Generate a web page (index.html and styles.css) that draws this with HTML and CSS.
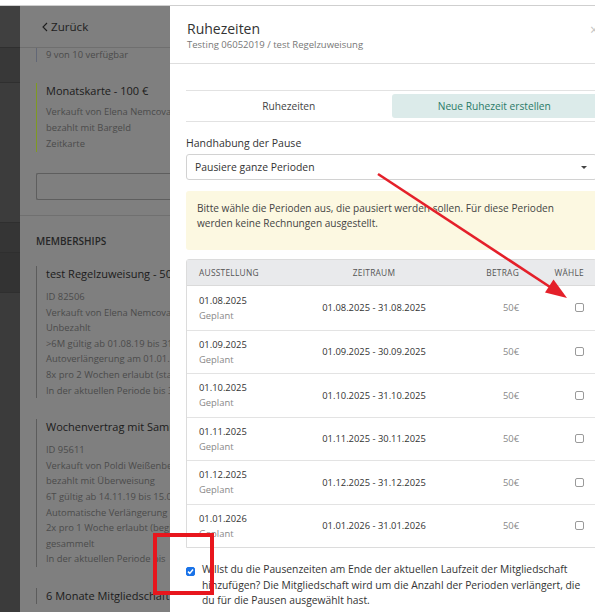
FILE: index.html
```html
<!DOCTYPE html>
<html lang="de">
<head>
<meta charset="utf-8">
<title>Ruhezeiten</title>
<link rel="stylesheet" href="styles.css">
</head>
<body>
<div class="topbar"></div>
<div class="app">
  <nav class="sidebar">
    <div class="side-item s1"></div>
    <div class="side-item s2"></div>
    <div class="side-item s3"></div>
    <div class="side-item s4"></div>
    <div class="side-item s5"></div>
    <div class="side-item s6"></div>
  </nav>
  <section class="panel">
    <div class="panel-head">
      <svg class="chev" width="6" height="10" viewBox="0 0 6 10"><path d="M5 1 L1 5 L5 9" fill="none" stroke="#1e1e1e" stroke-width="1.1"/></svg>
      <span>Zurück</span>
    </div>
    <div class="panel-top">
      <div class="pcard tail"><div class="pline">9 von 10 verfügbar</div></div>
      <div class="pcard green">
        <div class="ptitle">Monatskarte - 100 €</div>
        <div class="plines wide">
          <div class="pline">Verkauft von Elena Nemcova</div>
          <div class="pline">bezahlt mit Bargeld</div>
          <div class="pline">Zeitkarte</div>
        </div>
      </div>
      <div class="search"></div>
    </div>
    <div class="panel-section">
      <div class="section-title">MEMBERSHIPS</div>
      <div class="pcard">
        <div class="ptitle">test Regelzuweisung - 50 €</div>
        <div class="plines">
          <div class="pline">ID 82506</div>
          <div class="pline">Verkauft von Elena Nemcova</div>
          <div class="pline">Unbezahlt</div>
          <div class="pline">&gt;6M gültig ab 01.08.19 bis 31.12.19</div>
          <div class="pline">Autoverlängerung am 01.01.20</div>
          <div class="pline">8x pro 2 Wochen erlaubt (startet)</div>
          <div class="pline">In der aktuellen Periode bis 31.08.</div>
        </div>
      </div>
      <div class="pcard">
        <div class="ptitle">Wochenvertrag mit Sammeln</div>
        <div class="plines">
          <div class="pline">ID 95611</div>
          <div class="pline">Verkauft von Poldi Weißenberger</div>
          <div class="pline">bezahlt mit Überweisung</div>
          <div class="pline">6T gültig ab 14.11.19 bis 15.05.20</div>
          <div class="pline">Automatische Verlängerung</div>
          <div class="pline">2x pro 1 Woche erlaubt (beginnt)</div>
          <div class="pline">gesammelt</div>
          <div class="pline">In der aktuellen Periode bis</div>
        </div>
      </div>
      <div class="pcard">
        <div class="ptitle">6 Monate Mitgliedschaft</div>
      </div>
    </div>
  </section>
  <main class="main"></main>

  <div class="modal">
    <header class="modal-head">
      <div class="head-text">
        <div class="modal-title">Ruhezeiten</div>
        <div class="modal-sub">Testing 06052019 / test Regelzuweisung</div>
      </div>
      <span class="close">×</span>
    </header>
    <div class="modal-body">
      <div class="tabs">
        <div class="tab">Ruhezeiten</div>
        <div class="tab active">Neue Ruhezeit erstellen</div>
      </div>
      <div class="field-label">Handhabung der Pause</div>
      <div class="select">
        <span>Pausiere ganze Perioden</span>
        <span class="caret"></span>
      </div>
      <div class="notice">Bitte wähle die Perioden aus, die pausiert werden sollen. Für diese Perioden werden keine Rechnungen ausgestellt.</div>
      <div class="table">
        <div class="trow thead">
          <div class="c1">Ausstellung</div>
          <div class="c2">Zeitraum</div>
          <div class="c3">Betrag</div>
          <div class="c4">Wähle</div>
        </div>
        <div class="trow">
          <div class="c1"><div>01.08.2025</div><div class="muted">Geplant</div></div>
          <div class="c2">01.08.2025 - 31.08.2025</div>
          <div class="c3 muted">50€</div>
          <div class="c4"><span class="cb"></span></div>
        </div>
        <div class="trow">
          <div class="c1"><div>01.09.2025</div><div class="muted">Geplant</div></div>
          <div class="c2">01.09.2025 - 30.09.2025</div>
          <div class="c3 muted">50€</div>
          <div class="c4"><span class="cb"></span></div>
        </div>
        <div class="trow">
          <div class="c1"><div>01.10.2025</div><div class="muted">Geplant</div></div>
          <div class="c2">01.10.2025 - 31.10.2025</div>
          <div class="c3 muted">50€</div>
          <div class="c4"><span class="cb"></span></div>
        </div>
        <div class="trow">
          <div class="c1"><div>01.11.2025</div><div class="muted">Geplant</div></div>
          <div class="c2">01.11.2025 - 30.11.2025</div>
          <div class="c3 muted">50€</div>
          <div class="c4"><span class="cb"></span></div>
        </div>
        <div class="trow">
          <div class="c1"><div>01.12.2025</div><div class="muted">Geplant</div></div>
          <div class="c2">01.12.2025 - 31.12.2025</div>
          <div class="c3 muted">50€</div>
          <div class="c4"><span class="cb"></span></div>
        </div>
        <div class="trow">
          <div class="c1"><div>01.01.2026</div><div class="muted">Geplant</div></div>
          <div class="c2">01.01.2026 - 31.01.2026</div>
          <div class="c3 muted">50€</div>
          <div class="c4"><span class="cb"></span></div>
        </div>
      </div>
      <div class="extend">
        <span class="cb checked"><svg width="9" height="9" viewBox="0 0 9 9"><path d="M2 4.6 L3.8 6.4 L7 2.6" fill="none" stroke="#fff" stroke-width="1.5"/></svg></span>
        <p>Willst du die Pausenzeiten am Ende der aktuellen Laufzeit der Mitgliedschaft hinzufügen? Die Mitgliedschaft wird um die Anzahl der Perioden verlängert, die du für die Pausen ausgewählt hast.</p>
      </div>
    </div>
  </div>
</div>

<svg class="annot" width="595" height="612" viewBox="0 0 595 612">
  <line x1="378" y1="174" x2="550" y2="287" stroke="#e4202a" stroke-width="2.6"/>
  <polygon points="567,298 545,292.5 553.5,279.5" fill="#e4202a"/>
  <rect x="155" y="535" width="57" height="58" fill="none" stroke="#e8161d" stroke-width="4"/>
</svg>
</body>
</html>
```

FILE: styles.css
```css
* { box-sizing: border-box; }

html, body {
  margin: 0;
  padding: 0;
}

body {
  width: 595px;
  height: 612px;
  overflow: hidden;
  position: relative;
  font-family: "Open Sans", "Liberation Sans", sans-serif;
  background: #ffffff;
  color: #333;
}

.topbar {
  height: 6px;
  background: #ffffff;
  border-bottom: 1px solid #cfcfcf;
}

.app {
  position: relative;
  display: flex;
  height: 606px;
}

/* dimmed sidebar */
.sidebar {
  width: 20px;
  flex: none;
  display: flex;
  flex-direction: column;
  background: #3b3b3b;
}
.side-item { border-bottom: 1px solid #2f2f2f; }
.s1 { height: 42px; background: #404040; }
.s2 { height: 35px; background: #383838; }
.s3 { height: 140px; background: #3c3c3c; }
.s4 { height: 30px; background: #353535; }
.s5 { height: 40px; background: #333333; }
.s6 { flex: 1; background: #3b3b3b; border-bottom: 0; }

/* dimmed panel */
.panel {
  width: 150px;
  flex: none;
  background: #7f7f7f;
  overflow: hidden;
  white-space: nowrap;
}

.panel-head {
  height: 42px;
  border-bottom: 1px solid #6f6f6f;
  display: flex;
  align-items: center;
  gap: 3px;
  padding-left: 22px;
  font-size: 11.6px;
  color: #1e1e1e;
}
.chev { display: block; margin-top: 1px; }

.panel-top {
  padding-left: 16px;
  border-bottom: 1px solid #707070;
  padding-bottom: 15px;
}

.pcard {
  border-left: 1px solid #5c5c5c;
  padding-left: 9px;
  margin-bottom: 21px;
}
.pcard.tail {
  border-left-color: #626776;
  padding-top: 0;
  height: 14px;
  margin-bottom: 21px;
}
.pcard.green { border-left-color: #7f9a22; }

.ptitle {
  font-size: 11px;
  line-height: 16px;
  color: #1b1b1b;
}
.plines { margin-top: 7px; }
.plines.wide { margin-top: 5px; }
.plines.wide .pline { line-height: 16px; }
.pline {
  font-size: 9.4px;
  line-height: 15.6px;
  color: #4b4b4b;
}
.pcard.tail .pline { line-height: 14px; }

.search {
  height: 27px;
  width: 140px;
  border: 1px solid #5e5e5e;
  border-radius: 2px;
  margin-top: 20px;
  border-right: 0;
}

.panel-section {
  padding: 18px 0 0 16px;
}
.section-title {
  font-size: 10px;
  font-weight: 600;
  line-height: 14px;
  color: #262626;
  margin-bottom: 18px;
}

.main {
  flex: 1;
  background: #ffffff;
}

/* modal */
.modal {
  position: absolute;
  left: 170px;
  top: 0;
  bottom: 0;
  width: 443px;
  background: #ffffff;
  overflow: hidden;
}

.modal-head {
  display: flex;
  justify-content: space-between;
  align-items: flex-start;
  padding: 14px 15px 11px 17px;
  border-bottom: 1px solid #dedede;
}
.modal-title {
  font-size: 14px;
  line-height: 18px;
  color: #333;
}
.modal-sub {
  font-size: 9.5px;
  line-height: 14px;
  color: #777;
}
.close {
  font-size: 14px;
  line-height: 18px;
  color: #c4c4c4;
  margin-top: 1px;
}

.modal-body {
  padding: 26px 16px 0;
}

.tabs {
  display: flex;
  border-top: 1px solid #e2e2e2;
  border-bottom: 1px solid #e2e2e2;
  padding: 3px 0;
}
.tab {
  flex: 1;
  height: 24px;
  display: flex;
  align-items: center;
  justify-content: center;
  font-size: 10.2px;
  color: #444;
  border-radius: 3px;
}
.tab.active {
  background: #dcebea;
  color: #2b7a68;
}

.field-label {
  margin-top: 14px;
  font-size: 10.5px;
  line-height: 14px;
  color: #333;
}

.select {
  margin-top: 4px;
  height: 26px;
  border: 1px solid #d2d2d2;
  border-radius: 3px;
  display: flex;
  align-items: center;
  justify-content: space-between;
  padding: 0 9px 0 8px;
  font-size: 10.4px;
  color: #333;
}
.caret {
  width: 0;
  height: 0;
  border-left: 3.5px solid transparent;
  border-right: 3.5px solid transparent;
  border-top: 3.5px solid #444;
}

.notice {
  margin-top: 11px;
  background: #fcf8e1;
  border-radius: 3px;
  padding: 10px 14px 19px 11px;
  font-size: 10.1px;
  line-height: 15px;
  color: #444;
}

.table {
  margin-top: 9px;
  border: 1px solid #dcdcdc;
  border-radius: 3px 3px 0 0;
}
.trow {
  display: grid;
  grid-template-columns: 100px 150px 70px 65px;
  align-items: center;
  padding: 0 12px 0 12px;
  height: 43.5px;
  border-top: 1px solid #e3e3e3;
  font-size: 9.4px;
  line-height: 15px;
  color: #333;
}
.trow.thead {
  height: 26px;
  border-top: 0;
  border-bottom: 1px solid #dadada;
  background: #e9eaec;
  font-size: 8.4px;
  text-transform: uppercase;
  letter-spacing: 0.25px;
  color: #555;
}
.trow.thead + .trow { border-top: 0; }
.c2 { text-align: center; }
.c3 { text-align: right; }
.c4 { text-align: right; display: flex; justify-content: flex-end; }
.muted { color: #888; }

.cb {
  display: inline-block;
  width: 9px;
  height: 9px;
  border: 1px solid #9a9a9a;
  border-radius: 2px;
  background: #fff;
}
.cb.checked {
  background: #1a73e8;
  border-color: #1a73e8;
  flex: none;
  margin-top: 5px;
  position: relative;
}
.cb.checked svg {
  display: block;
  margin: -1px 0 0 -1px;
}

.extend {
  margin-top: 14px;
  display: flex;
  gap: 7px;
  padding-right: 4px;
}
.extend p {
  margin: 0;
  font-size: 10.3px;
  line-height: 15.5px;
  color: #333;
}

.annot {
  position: absolute;
  left: 0;
  top: 0;
  pointer-events: none;
}
```
